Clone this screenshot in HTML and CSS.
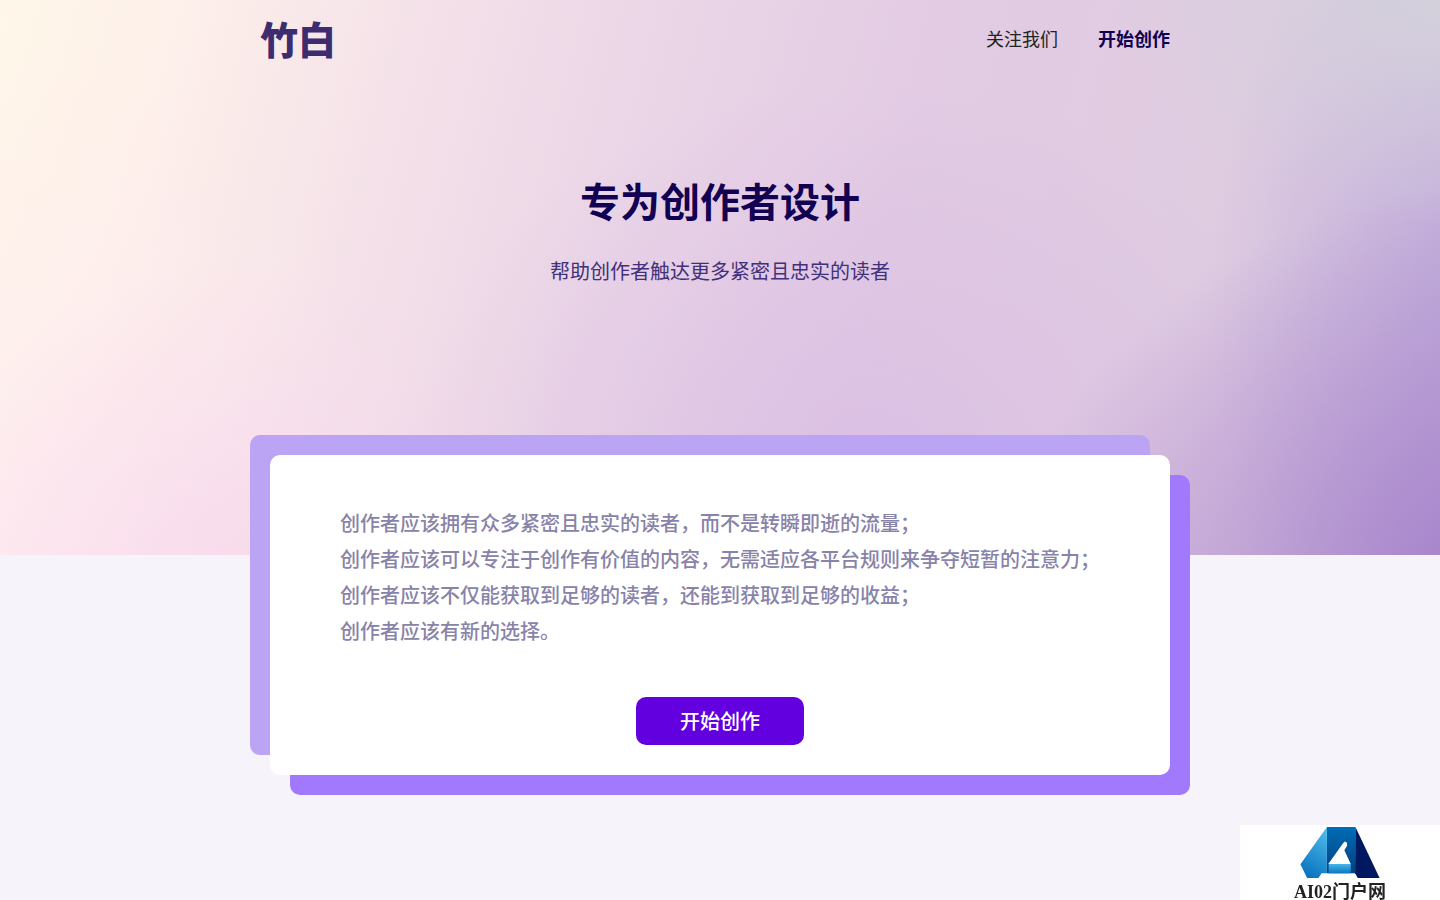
FILE: index.html
```
<!DOCTYPE html>
<html lang="zh-CN">
<head>
    <meta charset="UTF-8">
    <meta name="viewport" content="width=device-width, initial-scale=1.0">
    <title>竹白</title>
    <link rel="stylesheet" href="styles.css">
</head>
<body>
    <div class="hero">
        <header class="header">
            <a class="logo" href="#">竹白</a>
            <nav class="nav">
                <a href="#">关注我们</a>
                <a class="nav-start" href="#">开始创作</a>
            </nav>
        </header>
        <div class="intro">
            <h1>专为创作者设计</h1>
            <p>帮助创作者触达更多紧密且忠实的读者</p>
        </div>
    </div>

    <main class="card">
        <div class="card-body">
            <p>创作者应该拥有众多紧密且忠实的读者，而不是转瞬即逝的流量；</p>
            <p>创作者应该可以专注于创作有价值的内容，无需适应各平台规则来争夺短暂的注意力；</p>
            <p>创作者应该不仅能获取到足够的读者，还能到获取到足够的收益；</p>
            <p>创作者应该有新的选择。</p>
            <button type="button" class="start">开始创作</button>
        </div>
    </main>

    <a class="badge" href="#">
        <svg width="80" height="51" viewBox="182 22 236 152" aria-hidden="true">
            <defs>
                <linearGradient id="left" x1="0.6" y1="0" x2="0.3" y2="1">
                    <stop offset="0" stop-color="#4ab9ea"/>
                    <stop offset="1" stop-color="#0871bd"/>
                </linearGradient>
                <linearGradient id="middle" x1="0" y1="0" x2="0" y2="1">
                    <stop offset="0" stop-color="#006db8"/>
                    <stop offset="1" stop-color="#003f7d"/>
                </linearGradient>
                <linearGradient id="bar" x1="0" y1="0" x2="0" y2="1">
                    <stop offset="0" stop-color="#48b5e9"/>
                    <stop offset="1" stop-color="#0877c2"/>
                </linearGradient>
            </defs>
            <path fill="url(#middle)" d="M261 22H346V160H261Z"/>
            <path fill="url(#left)" d="M261 22V160H245L236 174H202L182 133Z"/>
            <path fill="#00185f" d="M346 22L418 174H353L345 160Z"/>
            <path fill="url(#bar)" d="M266 132H332V160H266Z"/>
            <path fill="#fff" d="M265 132L308 72L314 65L321 69V78L313 91L332 132Z"/>
        </svg>
        <span>AI02门户网</span>
    </a>
</body>
</html>
```
FILE: styles.css
```
* {
    box-sizing: border-box;
}
body {
    margin: 0;
    min-height: 100vh;
    font-family: "Noto Sans CJK SC", sans-serif;
    background-color: #f6f3fb;
}
h1, p {
    margin: 0;
}
a {
    color: inherit;
    text-decoration: none;
}
.hero {
    padding-bottom: 269px;
    background:
        radial-gradient(ellipse 22% 40% at 100% 0%, rgba(212, 210, 220, 0.95), rgba(212, 210, 220, 0)),
        radial-gradient(ellipse 36% 75% at 106% 108%, rgba(160, 120, 200, 0.95), rgba(160, 120, 200, 0)),
        radial-gradient(ellipse 22% 85% at 106% 55%, rgba(180, 160, 216, 0.7), rgba(180, 160, 216, 0)),
        radial-gradient(ellipse 32% 70% at 60% 85%, rgba(214, 184, 228, 0.6), rgba(214, 184, 228, 0)),
        radial-gradient(ellipse 24% 60% at 16% 108%, rgba(248, 214, 238, 0.7), rgba(248, 214, 238, 0)),
        radial-gradient(ellipse 30% 90% at 0% 100%, rgba(255, 235, 243, 0.6), rgba(255, 235, 243, 0)),
        linear-gradient(105deg, #fff7e9 0%, #fdefea 12%, #f4e1e9 27%, #ead5e7 43%, #e2cbe3 60%, #dfcce1 80%, #d0bedd 100%);
}
.header {
    display: flex;
    align-items: center;
    justify-content: space-between;
    max-width: 940px;
    height: 76px;
    margin: 0 auto;
    padding: 0 20px 0 10px;
}
.logo {
    color: #3d2c70;
    font-size: 38px;
    font-weight: 900;
    line-height: 56px;
}
.nav {
    display: flex;
    gap: 40px;
    color: #222;
    font-size: 18px;
    line-height: 28px;
}
.nav-start {
    color: #120052;
    font-weight: 700;
}
.intro {
    display: grid;
    gap: 26px;
    padding: 94px 20px 0;
    text-align: center;
}
.intro h1 {
    color: #120052;
    font-size: 40px;
    line-height: 60px;
}
.intro p {
    color: #41307a;
    font-size: 20px;
    line-height: 30px;
}
.card {
    position: relative;
    z-index: 0;
    max-width: 900px;
    margin: -100px auto 125px;
}
.card::before,
.card::after {
    content: "";
    position: absolute;
    z-index: -1;
    width: 100%;
    height: 100%;
    border-radius: 10px;
}
.card::before {
    top: -20px;
    left: -20px;
    background-color: #bba4f3;
}
.card::after {
    top: 20px;
    left: 20px;
    background-color: #a179fc;
}
.card-body {
    padding: 50px 70px 30px;
    border-radius: 10px;
    background-color: #fff;
    color: #8883a9;
    font-size: 20px;
    font-weight: 500;
    line-height: 36px;
}
.start {
    display: block;
    width: 168px;
    height: 48px;
    margin: 48px auto 0;
    padding: 0 0 2px;
    border: none;
    border-radius: 10px;
    background-color: #6200e0;
    color: #fff;
    font-family: inherit;
    font-size: 20px;
    font-weight: 500;
    cursor: pointer;
}
.start:hover {
    background-color: #5200bd;
}
.badge {
    position: fixed;
    right: 0;
    bottom: 0;
    display: flex;
    flex-direction: column;
    align-items: center;
    width: 200px;
    height: 75px;
    padding-top: 2px;
    background-color: #fff;
    color: #222;
    font-family: "Liberation Serif", "Noto Sans CJK SC", serif;
    font-size: 18px;
    font-weight: 700;
    line-height: 28px;
}
.badge svg {
    flex: none;
}
```
